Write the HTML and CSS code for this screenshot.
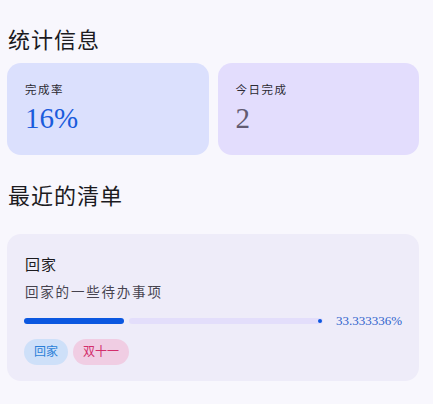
FILE: index.html
```html
<!DOCTYPE html>
<html lang="zh-CN">

<head>
  <meta charset="UTF-8" />
  <title>统计信息</title>
  <meta name="viewport" content="width=device-width, initial-scale=1.0" />
  <link rel="stylesheet" href="styles.css">
</head>

<body>

  <div class="page">
    <h2 class="section-title">统计信息</h2>
    <div class="stats">
      <div class="stat stat-rate">
        <div class="stat-label">完成率</div>
        <div class="stat-value">16%</div>
      </div>
      <div class="stat stat-today">
        <div class="stat-label">今日完成</div>
        <div class="stat-value">2</div>
      </div>
    </div>

    <h2 class="section-title recent-title">最近的清单</h2>
    <div class="list-card">
      <div class="list-name">回家</div>
      <div class="list-desc">回家的一些待办事项</div>
      <div class="progress-row">
        <div class="progress">
          <div class="progress-active" style="width: 33.333336%"></div>
          <div class="progress-track"><span class="progress-stop"></span></div>
        </div>
        <span class="progress-text">33.333336%</span>
      </div>
      <div class="tags">
        <span class="tag tag-blue">回家</span>
        <span class="tag tag-pink">双十一</span>
      </div>
    </div>
  </div>

</body>

</html>
```

FILE: styles.css
```css
* {
  margin: 0;
  padding: 0;
  box-sizing: border-box;
}

body {
  background: #f8f7fd;
  font-family: "Liberation Serif", "Noto Sans CJK SC", serif;
  color: #1c1b1f;
}

.page {
  padding: 0 14px 20px 7px;
}

.section-title {
  font-size: 22px;
  font-weight: normal;
  line-height: 30px;
  letter-spacing: 1px;
  margin-top: 26px;
  padding-left: 1px;
  margin-bottom: 7px;
}

.stats {
  display: grid;
  grid-template-columns: 1fr 1fr;
  gap: 9px;
}

.stat {
  border-radius: 14px;
  padding: 19px 18px 20px;
  height: 92px;
}

.stat-rate {
  background: #dbe0fd;
}

.stat-today {
  background: #e3ddfd;
}

.stat-label {
  font-size: 11.5px;
  line-height: 16px;
  letter-spacing: 1.5px;
  color: #2b2a33;
}

.stat-value {
  font-size: 29px;
  line-height: 34px;
  margin-top: 3px;
}

.stat-rate .stat-value {
  color: #1a5cdc;
}

.stat-today .stat-value {
  color: #625b71;
}

.recent-title {
  margin-top: 27px;
  margin-bottom: 22px;
}

.list-card {
  background: #eeecf9;
  border-radius: 14px;
  padding: 21px 17px 16px;
}

.list-name {
  font-size: 15px;
  line-height: 20px;
  letter-spacing: 1px;
  padding-left: 1px;
}

.list-desc {
  font-size: 13.5px;
  line-height: 18px;
  letter-spacing: 1.8px;
  color: #46434f;
  margin-top: 9px;
  padding-left: 1px;
}

.progress-row {
  display: flex;
  align-items: center;
  gap: 13px;
  height: 14px;
  margin-top: 12px;
}

.progress {
  flex: 1;
  display: flex;
  gap: 5px;
  height: 6px;
}

.progress-active {
  background: #0b57e0;
  border-radius: 3px;
}

.progress-track {
  flex: 1;
  background: #e3defb;
  border-radius: 3px;
  display: flex;
  align-items: center;
  justify-content: flex-end;
  padding-right: 1px;
}

.progress-stop {
  width: 4px;
  height: 4px;
  border-radius: 50%;
  background: #0b57e0;
}

.progress-text {
  font-size: 13px;
  line-height: 14px;
  color: #2f63cc;
}

.tags {
  display: flex;
  gap: 5px;
  margin-top: 11px;
}

.tag {
  height: 26px;
  line-height: 26px;
  padding: 0 10px;
  border-radius: 13px;
  font-size: 12px;
}

.tag-blue {
  background: #cee0f9;
  color: #2b7fd8;
}

.tag-pink {
  background: #f0cde3;
  color: #d32d6b;
}
```
